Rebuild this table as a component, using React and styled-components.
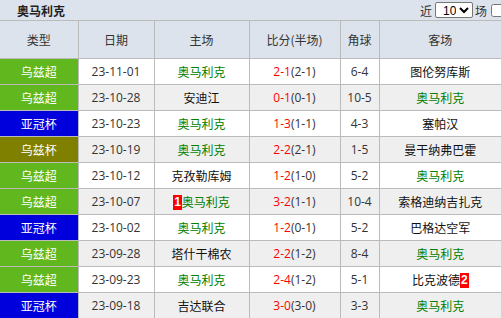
import React from 'react';
import styled, { createGlobalStyle } from 'styled-components';

const GlobalStyle = createGlobalStyle`
  html, body {
    margin: 0;
    padding: 0;
    background: #ffffff;
    overflow: hidden;
  }
  body {
    font-family: "Open Sans", "Noto Sans CJK SC", sans-serif;
    font-size: 12px;
    color: #333333;
  }
`;

const Wrapper = styled.div`
  width: 501px;
  height: 318px;
  overflow: hidden;
`;

const TopBar = styled.div`
  display: flex;
  align-items: center;
  justify-content: space-between;
  height: 20px;
  padding-left: 17px;
  background: #dce3ed;
`;

const Title = styled.h3`
  margin: 0;
  font-size: 12px;
  font-weight: 700;
  color: #222222;
  font-family: "Noto Sans CJK SC", sans-serif;
`;

const Filter = styled.div`
  display: flex;
  align-items: center;
  margin-right: -3px;
  color: #333333;
  font-family: "Noto Sans CJK SC", sans-serif;

  select {
    width: 38px;
    height: 16px;
    margin: 0 2px 0 3px;
    padding: 0 0 0 3px;
    font-family: "Liberation Sans", sans-serif;
    font-size: 12px;
    color: #000000;
    background: #ffffff;
    border: 1px solid #767676;
    border-radius: 2px;
  }

  input {
    width: 13px;
    height: 13px;
    margin: 0 0 0 4px;
    flex-shrink: 0;
  }
`;

const Table = styled.table`
  width: 501px;
  border-collapse: collapse;
  table-layout: fixed;

  th, td {
    border: 1px solid #bbbbbb;
    padding: 0;
    text-align: center;
    white-space: nowrap;
    overflow: hidden;
  }

  th:first-child, td:first-child {
    border-left: none;
  }

  th:last-child, td:last-child {
    border-right: none;
  }
`;

const HeadCell = styled.th`
  height: 37px;
  background: #dce3ed;
  font-weight: 400;
  color: #333333;
  font-family: "Noto Sans CJK SC", sans-serif;
`;

const Row = styled.tr`
  background: ${({ $odd }) => ($odd ? '#efefef' : '#ffffff')};
`;

const typeColors = {
  green: '#61b81e',
  blue: '#0000dd',
  olive: '#7f8000',
};

const TypeCell = styled.td`
  height: 25px;
  background: ${({ $tone }) => typeColors[$tone]};
  color: #ffffff;
  font-family: "Noto Sans CJK SC", sans-serif;
`;

const Cell = styled.td`
  height: 25px;
  color: #333333;
`;

const TeamCell = styled.td`
  height: 25px;
  color: ${({ $own }) => ($own ? '#008000' : '#111111')};
  font-family: "Noto Sans CJK SC", sans-serif;
`;

const Score = styled.span`
  color: #ff0000;
`;

const Badge = styled.span`
  display: inline-block;
  padding: 0 1px;
  line-height: 15px;
  background: #ff0000;
  color: #ffffff;
  font-family: "Liberation Sans", sans-serif;
  font-weight: 700;
  vertical-align: 1px;
`;

const matches = [
  { type: '乌兹超', tone: 'green', date: '23-11-01', home: '奥马利克', ft: '2-1', ht: '(2-1)', corner: '6-4', away: '图伦努库斯' },
  { type: '乌兹超', tone: 'green', date: '23-10-28', home: '安迪江', ft: '0-1', ht: '(0-1)', corner: '10-5', away: '奥马利克' },
  { type: '亚冠杯', tone: 'blue', date: '23-10-23', home: '奥马利克', ft: '1-3', ht: '(1-1)', corner: '4-3', away: '塞帕汉' },
  { type: '乌兹杯', tone: 'olive', date: '23-10-19', home: '奥马利克', ft: '2-2', ht: '(2-1)', corner: '1-5', away: '曼干纳弗巴霍' },
  { type: '乌兹超', tone: 'green', date: '23-10-12', home: '克孜勒库姆', ft: '1-2', ht: '(1-0)', corner: '5-2', away: '奥马利克' },
  { type: '乌兹超', tone: 'green', date: '23-10-07', home: '奥马利克', homeBadge: '1', ft: '3-2', ht: '(1-1)', corner: '10-4', away: '索格迪纳吉扎克' },
  { type: '亚冠杯', tone: 'blue', date: '23-10-02', home: '奥马利克', ft: '1-2', ht: '(0-1)', corner: '5-2', away: '巴格达空军' },
  { type: '乌兹超', tone: 'green', date: '23-09-28', home: '塔什干棉农', ft: '2-2', ht: '(1-2)', corner: '8-4', away: '奥马利克' },
  { type: '乌兹超', tone: 'green', date: '23-09-23', home: '奥马利克', ft: '2-4', ht: '(1-2)', corner: '5-1', away: '比克波德', awayBadge: '2' },
  { type: '亚冠杯', tone: 'blue', date: '23-09-18', home: '吉达联合', ft: '3-0', ht: '(3-0)', corner: '3-3', away: '奥马利克' },
];

const TEAM = '奥马利克';

const App = () => (
  <Wrapper>
    <GlobalStyle />
    <TopBar>
      <Title>{TEAM}</Title>
      <Filter>
        <span>近</span>
        <select defaultValue="10">
          <option value="5">5</option>
          <option value="10">10</option>
          <option value="20">20</option>
        </select>
        <span>场</span>
        <input type="checkbox" />
      </Filter>
    </TopBar>
    <Table>
      <colgroup>
        <col style={{ width: 78 }} />
        <col style={{ width: 76 }} />
        <col style={{ width: 95 }} />
        <col style={{ width: 91 }} />
        <col style={{ width: 39 }} />
        <col style={{ width: 122 }} />
      </colgroup>
      <thead>
        <tr>
          <HeadCell>类型</HeadCell>
          <HeadCell>日期</HeadCell>
          <HeadCell>主场</HeadCell>
          <HeadCell>比分(半场)</HeadCell>
          <HeadCell>角球</HeadCell>
          <HeadCell>客场</HeadCell>
        </tr>
      </thead>
      <tbody>
        {matches.map((m, i) => (
          <Row key={m.date} $odd={i % 2 === 1}>
            <TypeCell $tone={m.tone}>{m.type}</TypeCell>
            <Cell>{m.date}</Cell>
            <TeamCell $own={m.home === TEAM}>
              {m.homeBadge && <Badge>{m.homeBadge}</Badge>}
              {m.home}
            </TeamCell>
            <Cell>
              <Score>{m.ft}</Score>
              {m.ht}
            </Cell>
            <Cell>{m.corner}</Cell>
            <TeamCell $own={m.away === TEAM}>
              {m.away}
              {m.awayBadge && <Badge>{m.awayBadge}</Badge>}
            </TeamCell>
          </Row>
        ))}
      </tbody>
    </Table>
  </Wrapper>
);

export default App;
